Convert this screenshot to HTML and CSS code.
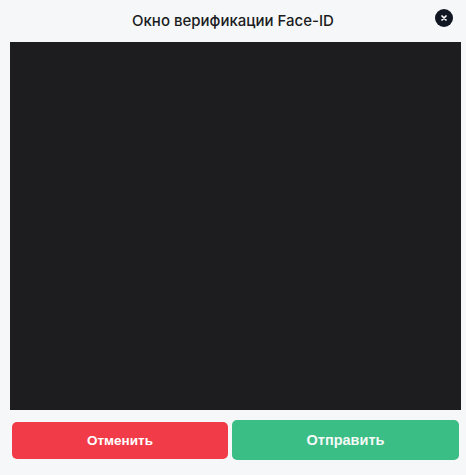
FILE: index.html
```html
<!DOCTYPE html>
<html lang="ru">
<head>
<meta charset="utf-8">
<title>Face-ID</title>
<link rel="stylesheet" href="styles.css">
</head>
<body>
<div class="modal">
  <header class="modal-header">
    <span></span>
    <h1 class="modal-title">Окно верификации Face-ID</h1>
    <button class="close-btn" aria-label="Закрыть">
      <svg width="8" height="8" viewBox="0 0 8 8"><path d="M2 2 L6 6 M6 2 L2 6" stroke="#fff" stroke-width="1.7" stroke-linecap="round"/></svg>
    </button>
  </header>
  <div class="camera"></div>
  <div class="actions">
    <button class="btn btn-cancel">Отменить</button>
    <button class="btn btn-send">Отправить</button>
  </div>
</div>
</body>
</html>
```

FILE: styles.css
```css
html, body {
  margin: 0;
  padding: 0;
  background: #f6f7f9;
}
.modal {
  width: 466px;
  height: 475px;
  display: flex;
  flex-direction: column;
}
.modal-header {
  height: 42px;
  display: grid;
  grid-template-columns: 1fr auto 1fr;
  align-items: center;
}
.modal-title {
  margin: 0;
  font-family: Inter, "Noto Sans", sans-serif;
  font-size: 15px;
  font-weight: 500;
  color: #1a1c22;
  padding-bottom: 2px;
}
.close-btn {
  justify-self: end;
  margin-right: 13px;
  margin-bottom: 6px;
  width: 18px;
  height: 18px;
  border-radius: 50%;
  border: none;
  padding: 0;
  background: #101722;
  display: flex;
  align-items: center;
  justify-content: center;
}
.camera {
  margin: 0 5px 0 10px;
  height: 368px;
  background: #1d1d1f;
}
.actions {
  display: grid;
  grid-template-columns: 216px 227px;
  column-gap: 4px;
  padding: 10px 0 0 12px;
  height: 40px;
  align-items: center;
}
.btn {
  border: none;
  border-radius: 5px;
  color: #fff;
  font-family: "Liberation Sans", Arial, sans-serif;
  font-weight: 700;
  font-size: 13.5px;
  padding: 0;
}
.btn-cancel {
  height: 37px;
  background: #f13b49;
}
.btn-send {
  height: 40px;
  background: #3bbe85;
  font-size: 14.5px;
  color: #f4f9f6;
}
```
